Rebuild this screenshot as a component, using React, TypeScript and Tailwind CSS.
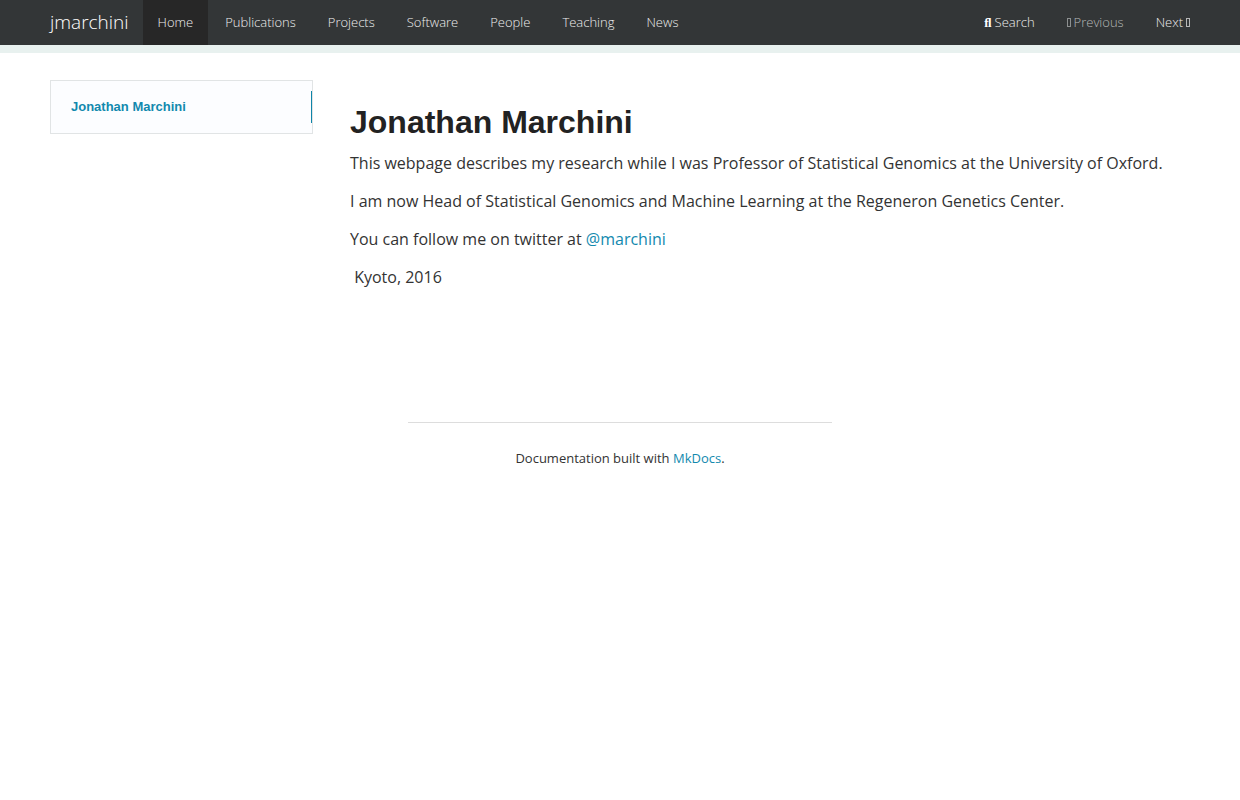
const navLinks = ['Home', 'Publications', 'Projects', 'Software', 'People', 'Teaching', 'News'];

function ArrowBox() {
  return (
    <svg width="4" height="9" viewBox="0 0 4 9" fill="none" stroke="currentColor" strokeWidth="1" aria-hidden="true">
      <rect x="0.5" y="0.5" width="3" height="8" opacity="0.7" />
    </svg>
  );
}

function Navbar() {
  return (
    <header className="bg-[#333637] border-b-8 border-b-[#e8f1ef] text-[#eeeeee] font-light">
      <div className="max-w-[1170px] mx-auto px-[15px] flex items-center">
        <a href="#" className="pr-[14px] text-[19px] leading-[45px] text-white">jmarchini</a>
        <nav className="flex flex-1 gap-[2px] text-[13px] leading-[45px]">
          {navLinks.map((name) => (
            <a
              key={name}
              href="#"
              className={`px-[15px] hover:bg-[#272727] ${name === 'Home' ? 'bg-[#272727]' : ''}`}
            >
              {name}
            </a>
          ))}
        </nav>
        <div className="flex gap-[2px] text-[13px] leading-[45px]">
          <button type="button" className="px-[15px] flex items-center gap-[3px] cursor-pointer">
            <span aria-hidden="true" className="font-['Liberation_Serif',serif] font-bold text-white">ﬂ</span>
            Search
          </button>
          <a href="#" className="px-[15px] flex items-center gap-[3px] text-[#b4b6b6]">
            <ArrowBox />
            Previous
          </a>
          <a href="#" className="pl-[15px] flex items-center gap-[3px]">
            Next
            <ArrowBox />
          </a>
        </div>
      </div>
    </header>
  );
}

function Sidebar() {
  return (
    <aside className="w-[263px] shrink-0 self-start mt-[27px] py-[10px] bg-[#fcfdff] border border-[#e1e4e5]">
      <a
        href="#jonathan-marchini"
        className="block pl-5 border-r border-r-[#0f85a8] font-['Liberation_Sans',Arial,sans-serif] font-bold text-[13px] leading-8 text-[#1289ae]"
      >
        Jonathan Marchini
      </a>
    </aside>
  );
}

export default function App() {
  return (
    <div className="min-h-screen bg-white font-['Open_Sans',sans-serif] text-base text-[#333333]">
      <Navbar />

      <div className="max-w-[1170px] mx-auto px-[15px] flex gap-[37px]">
        <Sidebar />
        <main className="flex-1 min-w-0 pt-[50px] leading-7">
          <h1
            id="jonathan-marchini"
            className="font-['Liberation_Sans',Arial,sans-serif] font-bold text-[32px] leading-[38px] text-[#222222]"
          >
            Jonathan Marchini
          </h1>
          <div className="mt-2 flex flex-col gap-[10px]">
            <p>This webpage describes my research while I was Professor of Statistical Genomics at the University of Oxford.</p>
            <p>I am now Head of Statistical Genomics and Machine Learning at the Regeneron Genetics Center.</p>
            <p>
              You can follow me on twitter at <a href="#" className="text-[#1289ae] hover:underline">@marchini</a>
            </p>
            <p>&nbsp;Kyoto, 2016</p>
          </div>
        </main>
      </div>

      <footer className="mt-[131px] px-5 text-center text-[13px] leading-5">
        <hr className="w-[424px] max-w-full mx-auto border-[#dddddd]" />
        <p className="mt-[25px]">
          Documentation built with <a href="#" className="text-[#1289ae] hover:underline">MkDocs</a>.
        </p>
      </footer>
    </div>
  );
}
